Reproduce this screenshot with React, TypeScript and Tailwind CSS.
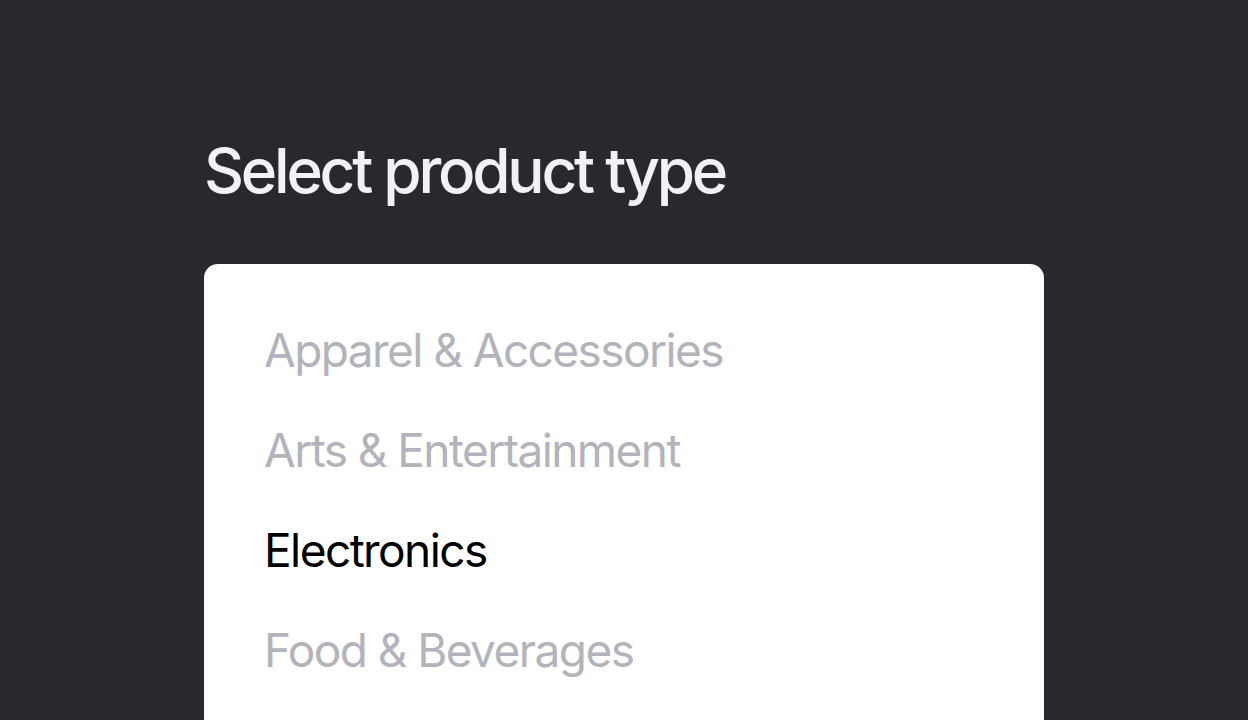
export default function App() {
  const items = [
    { label: "Apparel & Accessories", active: false },
    { label: "Arts & Entertainment", active: false },
    { label: "Electronics", active: true },
    { label: "Food & Beverages", active: false },
  ];
  return (
    <div
      className="w-[1248px] h-[720px] overflow-hidden bg-[#28292e]"
      style={{ fontFamily: "Inter, 'Noto Sans', sans-serif" }}
    >
      <div className="w-[840px] mx-auto pt-[140px]">
        <h1 className="text-[62px] leading-[62px] font-medium text-[#f1f2f7] tracking-[-0.052em]">
          Select product type
        </h1>
        <div className="mt-[62px] bg-white rounded-[14px] pt-[36px] px-[60px] pb-[36px]">
          <ul className="flex flex-col">
            {items.map((it) => (
              <li
                key={it.label}
                className={
                  "h-[100px] leading-[100px] text-[46px] tracking-[-0.034em] " +
                  (it.active ? "text-black" : "text-[#b3b4bb]")
                }
              >
                {it.label}
              </li>
            ))}
          </ul>
        </div>
      </div>
    </div>
  );
}
